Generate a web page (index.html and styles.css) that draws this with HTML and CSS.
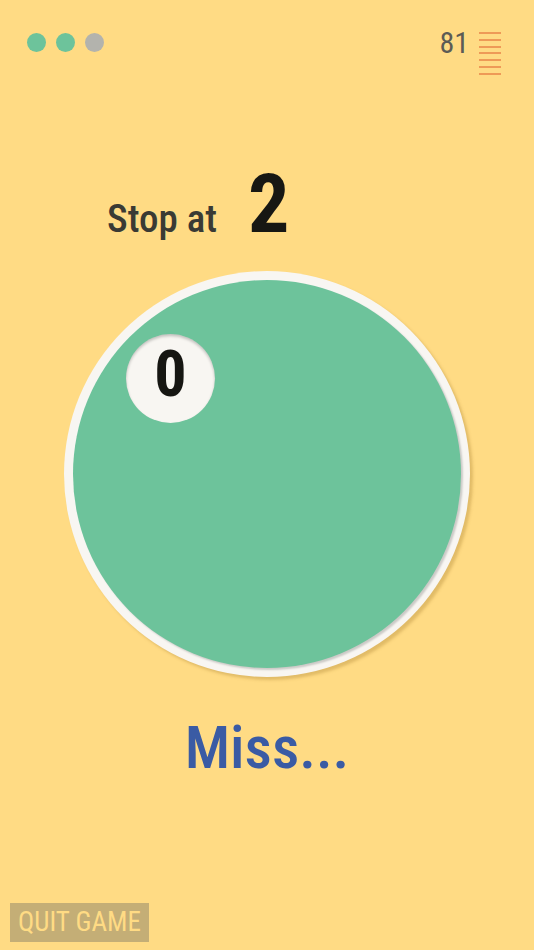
FILE: index.html
```html
<!DOCTYPE html>
<html>
<head>
<meta charset="utf-8">
<link rel="stylesheet" href="styles.css">
</head>
<body>
<div class="screen">
  <header class="topbar">
    <div class="dots">
      <span class="dot dot-on"></span>
      <span class="dot dot-on"></span>
      <span class="dot dot-off"></span>
    </div>
    <div class="score">
      <span class="score-num">81</span>
      <svg class="menu-icon" width="22" height="43" viewBox="0 0 22 43">
        <rect x="0" y="0" width="22" height="2"/>
        <rect x="0" y="7" width="22" height="2"/>
        <rect x="0" y="14" width="22" height="2"/>
        <rect x="0" y="20" width="22" height="2"/>
        <rect x="0" y="27" width="22" height="2"/>
        <rect x="0" y="34" width="22" height="2"/>
        <rect x="0" y="41" width="22" height="2"/>
      </svg>
    </div>
  </header>

  <div class="prompt">
    <span class="prompt-label">Stop at</span>
    <span class="prompt-target">2</span>
  </div>

  <div class="dial">
    <div class="dial-face">
      <div class="counter">0</div>
    </div>
  </div>

  <div class="result">Miss...</div>

  <button class="quit">QUIT GAME</button>
</div>
</body>
</html>
```
FILE: styles.css
```css
html, body {
  margin: 0;
  padding: 0;
  background: #ffdb84;
}

.screen {
  width: 534px;
  height: 950px;
  display: flex;
  flex-direction: column;
  font-family: "Roboto Condensed", Roboto, sans-serif;
  background: #ffdb84;
}

.topbar {
  display: flex;
  justify-content: space-between;
  align-items: flex-start;
  padding: 28px 33px 0 27px;
}

.dots {
  display: flex;
  gap: 10px;
  margin-top: 5px;
}

.dot {
  width: 19px;
  height: 19px;
  border-radius: 50%;
}

.dot-on { background: #6dc39b; }
.dot-off { background: #b3b3ad; }

.score {
  display: flex;
  align-items: flex-start;
  gap: 10px;
}

.score-num {
  font-size: 30px;
  line-height: 1;
  color: #5c5b55;
}

.menu-icon {
  display: block;
  margin-top: 4px;
  fill: #ee9a57;
}

.prompt {
  display: flex;
  align-items: baseline;
  padding-left: 107px;
  margin-top: 88px;
  line-height: 1;
}

.prompt-label {
  font-size: 39px;
  font-weight: 500;
  color: #3a3a34;
}

.prompt-target {
  font-size: 82px;
  font-weight: 700;
  color: #171713;
  margin-left: 31px;
}

.dial {
  width: 406px;
  height: 406px;
  box-sizing: border-box;
  padding: 9px;
  margin: 26px auto 0;
  border-radius: 50%;
  background: #f8f6f2;
  box-shadow: 3px 3px 3px rgba(170, 130, 50, 0.35);
}

.dial-face {
  position: relative;
  width: 388px;
  height: 388px;
  border-radius: 50%;
  background: #6dc39b;
  box-shadow: 2px 2px 2px rgba(0, 0, 0, 0.18);
}

.counter {
  position: absolute;
  left: 53px;
  top: 54px;
  width: 89px;
  height: 89px;
  box-sizing: border-box;
  padding-top: 9px;
  border-radius: 50%;
  background: #f8f6f2;
  box-shadow: inset 0 2px 3px rgba(0, 0, 0, 0.22);
  text-align: center;
  font-size: 64px;
  font-weight: 700;
  line-height: 1;
  color: #161612;
}

.result {
  margin-top: 41px;
  text-align: center;
  font-size: 60px;
  font-weight: 500;
  line-height: 1;
  color: #3a5ba4;
}

.quit {
  margin: auto 0 8px 10px;
  align-self: flex-start;
  height: 39px;
  padding: 0 8px;
  border: none;
  border-radius: 0;
  background: #c4ae76;
  color: #ffdb84;
  font-family: "Roboto Condensed", Roboto, sans-serif;
  font-size: 27px;
  line-height: 39px;
}
```
